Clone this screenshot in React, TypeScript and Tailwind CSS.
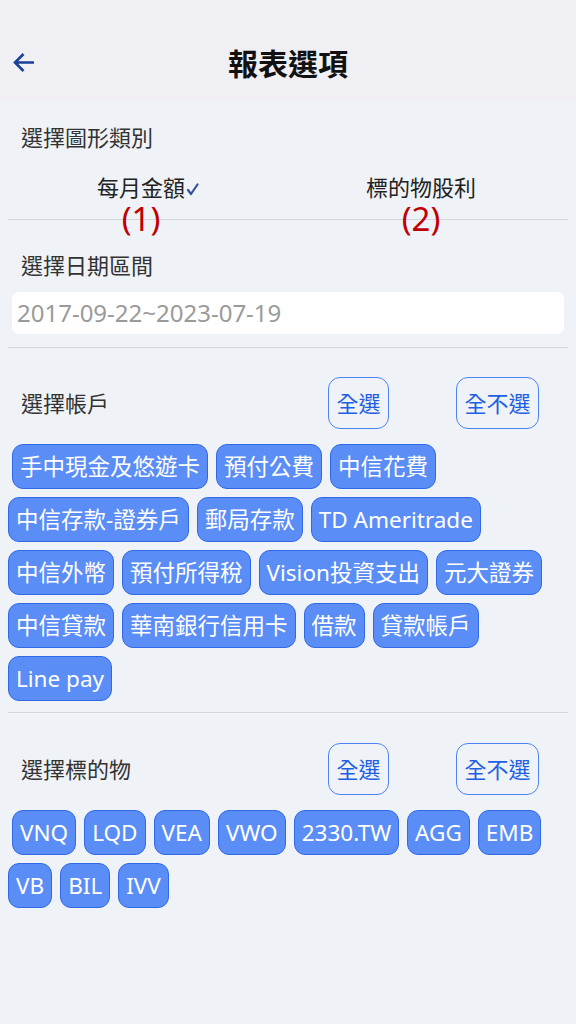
import { ReactNode } from 'react';

const accounts = [
  '手中現金及悠遊卡', '預付公費', '中信花費', '中信存款-證券戶', '郵局存款', 'TD Ameritrade',
  '中信外幣', '預付所得稅', 'Vision投資支出', '元大證券', '中信貸款', '華南銀行信用卡',
  '借款', '貸款帳戶', 'Line pay',
];

const targets = ['VNQ', 'LQD', 'VEA', 'VWO', '2330.TW', 'AGG', 'EMB', 'VB', 'BIL', 'IVV'];

const font = { fontFamily: '"Noto Sans", "Noto Sans CJK TC", sans-serif' };

const Divider = () => <div className="mx-2 h-px bg-[#d3d6da]" />;

const Label = ({ children }: { children: ReactNode }) => (
  <div className="pl-[21px] text-[22px] leading-[30px] text-[#333333]">{children}</div>
);

const Check = () => (
  <svg width="13" height="14" viewBox="0 0 13 14" className="ml-[1px] mt-[3px]">
    <path d="M2 8 L5 12 L11.5 2.5" fill="none" stroke="#34509c" strokeWidth="2.2" strokeLinecap="round" strokeLinejoin="round" />
  </svg>
);

const ChartOption = ({ text, mark, checked }: { text: string; mark: string; checked?: boolean }) => (
  <div className="flex-1 flex justify-center">
    <div className="flex items-center">
      <span className="relative text-[22px] leading-[30px] text-[#222222]">
        {text}
        <span className="absolute left-1/2 top-[27px] -translate-x-1/2 text-[33px] leading-[40px] text-[#c00000]">
          {mark}
        </span>
      </span>
      {checked ? <Check /> : <span className="w-[14px]" />}
    </div>
  </div>
);

const OutlineButton = ({ children }: { children: ReactNode }) => (
  <button className="h-[52px] px-[7.5px] rounded-[12px] border border-[#4b84f2] text-[22px] leading-[30px] text-[#1e5fe4] bg-transparent">
    {children}
  </button>
);

const SelectRow = ({ label }: { label: string }) => (
  <div className="flex items-center h-[52px]">
    <div className="flex-1">
      <Label>{label}</Label>
    </div>
    <div className="flex items-center gap-[67px] mr-[37px]">
      <OutlineButton>全選</OutlineButton>
      <OutlineButton>全不選</OutlineButton>
    </div>
  </div>
);

const Tag = ({ text, first }: { text: string; first?: boolean }) => (
  <div
    className={`m-1 ${first ? 'ml-2' : ''} h-[45px] flex items-center px-[7px] rounded-[11px] border border-[#2f69e6] bg-[#5b8df7] text-white text-[22.5px] leading-[30px] whitespace-nowrap`}
  >
    {text}
  </div>
);

export default function App() {
  return (
    <div className="min-h-screen bg-[#eff2f6]" style={font}>
      <div className="h-[101px] bg-[#efeff4] pt-[44px] grid grid-cols-[1fr_auto_1fr] items-start">
        <div className="pl-[13px] pt-[8px]">
          <svg width="22" height="21" viewBox="0 0 22 21">
            <path d="M21 10.5 H2.5 M10.5 2 L2 10.5 L10.5 19" fill="none" stroke="#1b4099" strokeWidth="2.6" />
          </svg>
        </div>
        <div className="text-[30px] leading-[40px] font-bold text-[#111111]">報表選項</div>
        <div />
      </div>

      <div className="pt-[21px]">
        <Label>選擇圖形類別</Label>
        <div className="flex px-2 mt-[20px] mb-[17px]">
          <ChartOption text="每月金額" mark="(1)" checked />
          <ChartOption text="標的物股利" mark="(2)" />
        </div>
        <Divider />

        <div className="mt-[30px]">
          <Label>選擇日期區間</Label>
        </div>
        <div className="mx-3 mt-[12px] h-[42px] bg-white rounded-[7px] flex items-center pl-[5px] text-[24px] text-[#9a9a9a]">
          2017-09-22~2023-07-19
        </div>
        <div className="mt-[13px]">
          <Divider />
        </div>

        <div className="mt-[29px]">
          <SelectRow label="選擇帳戶" />
        </div>
        <div className="mt-[11px] px-1 flex flex-wrap">
          {accounts.map((a, i) => (
            <Tag key={a} text={a} first={i === 0} />
          ))}
        </div>
        <div className="mt-[7px]">
          <Divider />
        </div>

        <div className="mt-[30px]">
          <SelectRow label="選擇標的物" />
        </div>
        <div className="mt-[11px] px-1 flex flex-wrap">
          {targets.map((t, i) => (
            <Tag key={t} text={t} first={i === 0} />
          ))}
        </div>
      </div>
    </div>
  );
}
